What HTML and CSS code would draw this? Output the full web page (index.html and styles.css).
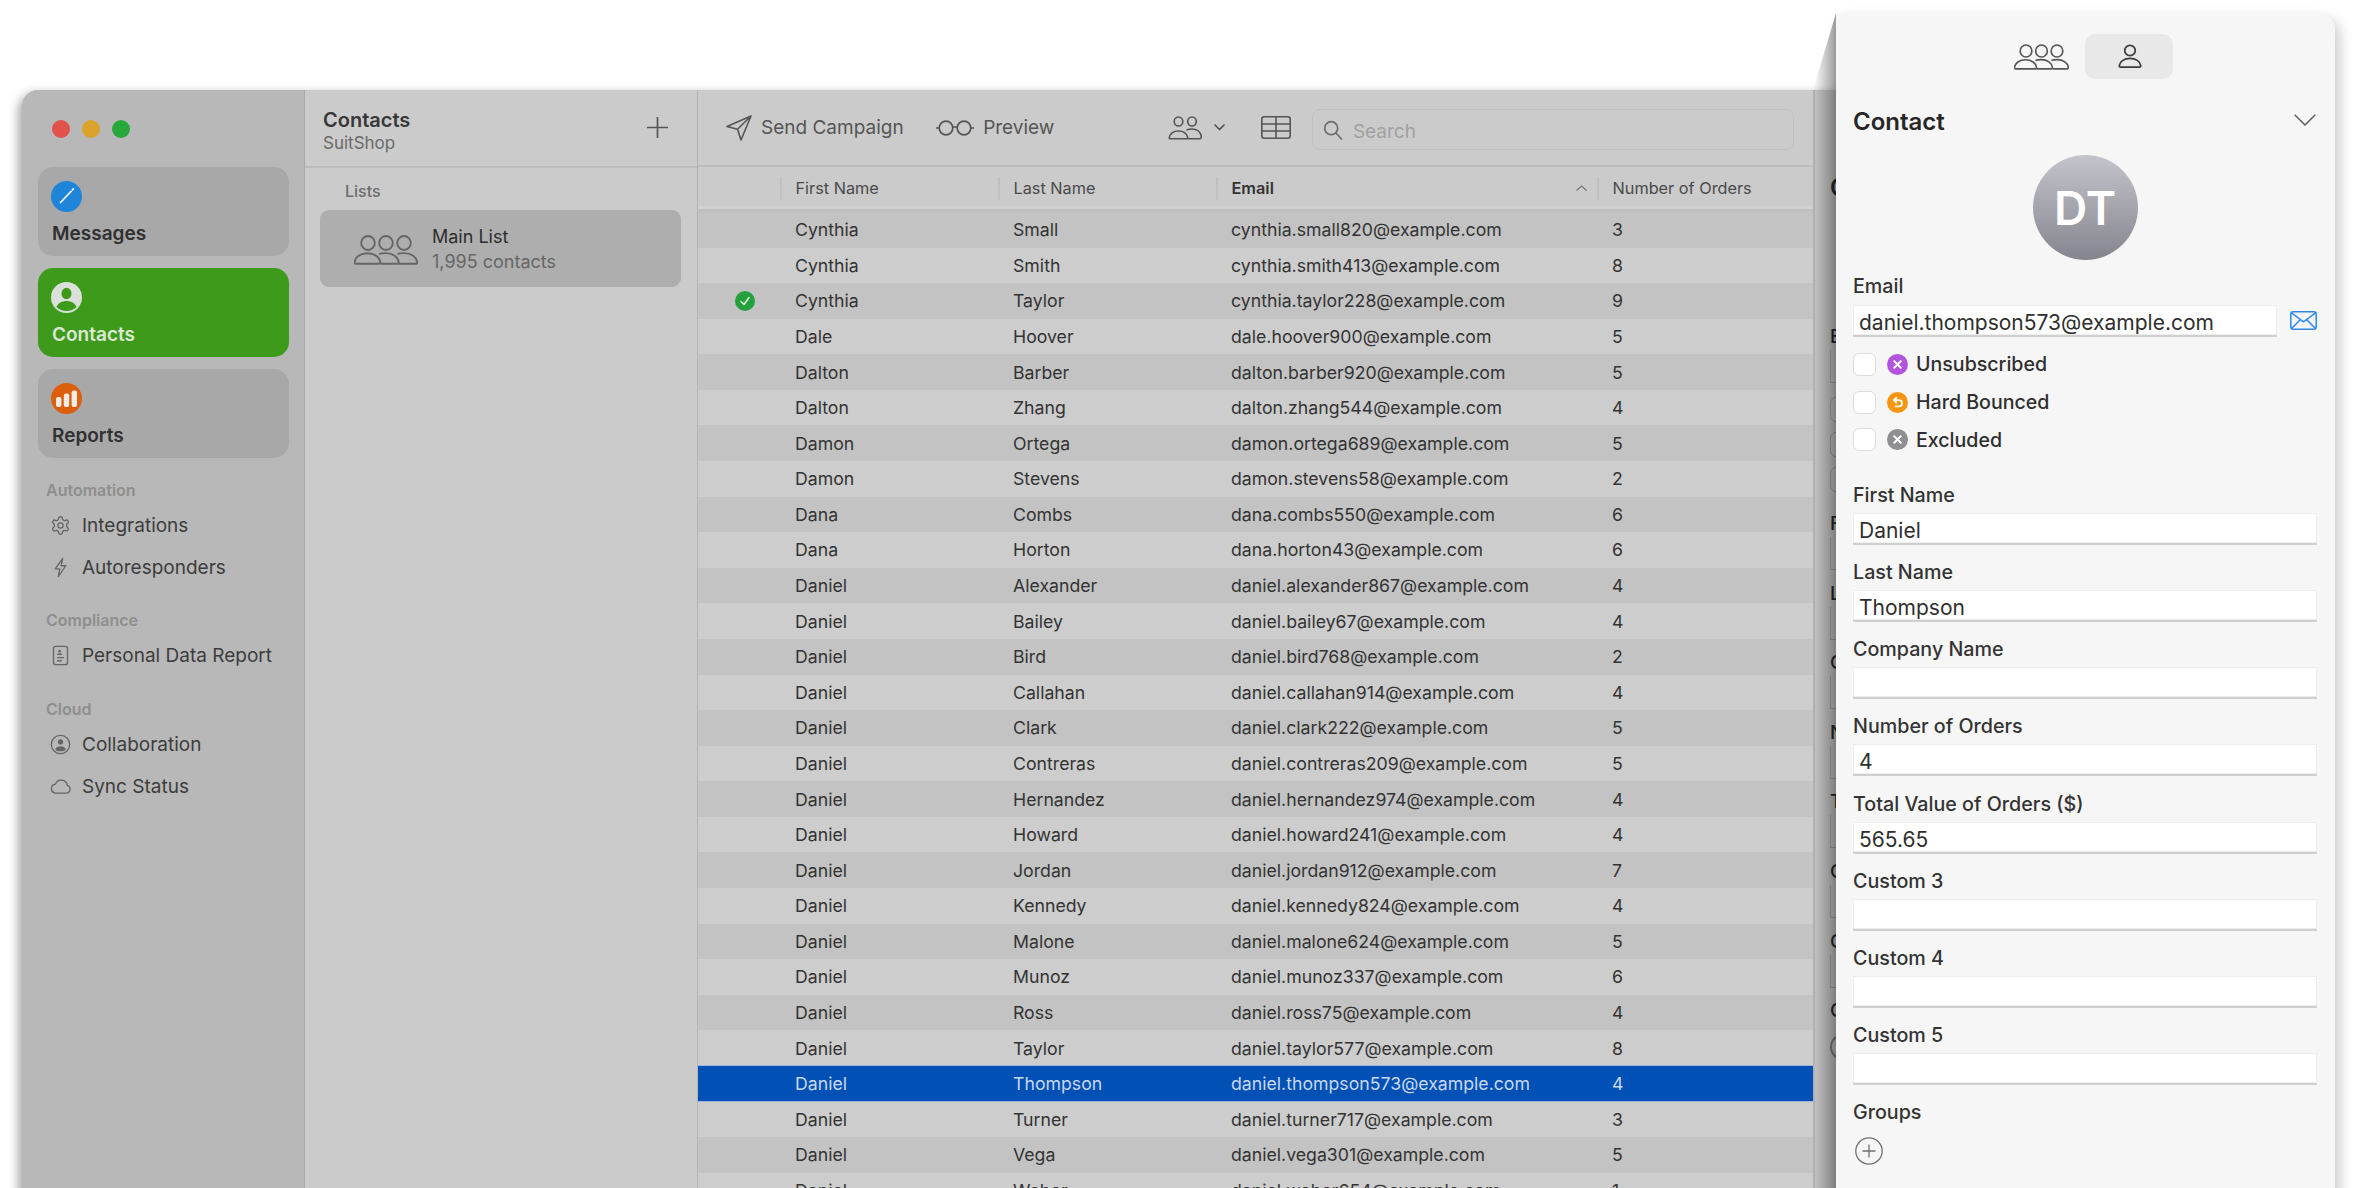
FILE: index.html
```html
<!DOCTYPE html>
<html lang="en">
<head>
<meta charset="utf-8">
<title>Contacts</title>
<link rel="stylesheet" href="styles.css">
</head>
<body>
<svg class="defs" width="0" height="0" aria-hidden="true">
  <symbol id="i-three" viewBox="0 0 64 30">
    <g fill="none" stroke="currentColor" stroke-width="1.9">
      <ellipse cx="14" cy="8" rx="6.800" ry="7"/><ellipse cx="32" cy="8" rx="6.800" ry="7"/><ellipse cx="50" cy="8" rx="6.800" ry="7"/>
      <path d="M1.5 28.8h23.4c1 0 1.5-.6 1.4-1.600-.6-5-6-9-12.900-9s-12.300 4-12.900 9c-.1 1 .4 1.600 1.500 1.600z"/>
      <path d="M25 18.800c2-.5 4.400-.7 6.800-.7 6.900 0 12.300 4 12.900 9 .1 1-.4 1.700-1.400 1.700H26.500"/>
      <path d="M43.500 18.800c2-.5 4.400-.7 6.800-.7 6.900 0 12.300 4 12.900 9 .1 1-.4 1.700-1.400 1.700H45"/>
    </g>
  </symbol>
  <symbol id="i-person" viewBox="0 0 26 26">
    <g fill="none" stroke="currentColor" stroke-width="1.900">
      <ellipse cx="13" cy="6.500" rx="5.700" ry="5.600"/>
      <path d="M2.800 24.500h20.400c1 0 1.600-.6 1.400-1.700-.7-4.500-5.500-7.800-11.600-7.800S2.100 18.300 1.400 22.800c-.2 1.100.4 1.700 1.400 1.700z"/>
    </g>
  </symbol>
  <symbol id="i-x" viewBox="0 0 22 22">
    <path d="M7.600 7.600l6.800 6.800M14.400 7.600l-6.800 6.800" stroke="#fff" stroke-width="2" stroke-linecap="round" fill="none"/>
  </symbol>
</svg>

<div class="desktop">
  <div class="window">
    <aside class="sidebar">
      <div class="traffic"><span class="light red"></span><span class="light amber"></span><span class="light green"></span></div>
      <nav class="cards">
        <a class="card">
          <svg class="card-icon" viewBox="0 0 31 31"><circle cx="15.500" cy="15.500" r="15.500" fill="#1e85d9"/><path d="M9.500 21.500L20 10.500" stroke="#fff" stroke-width="1.800" stroke-linecap="round"/><path d="M21.500 8.800l.8-.8" stroke="#fff" stroke-width="1.800" stroke-linecap="round"/></svg>
          <span>Messages</span>
        </a>
        <a class="card active">
          <svg class="card-icon" viewBox="0 0 31 31"><circle cx="15.500" cy="15.500" r="15.500" fill="#dce0da"/><ellipse cx="15.500" cy="11.500" rx="5" ry="5.800" fill="#3d9a1b"/><path d="M5.500 25c1.500-4 5.500-6 10-6s8.500 2 10 6c-2.600 2.500-6 4-10 4s-7.400-1.500-10-4z" fill="#3d9a1b"/></svg>
          <span>Contacts</span>
        </a>
        <a class="card">
          <svg class="card-icon" viewBox="0 0 31 31"><circle cx="15.500" cy="15.500" r="15.500" fill="#dc5f0c"/><rect x="5" y="14" width="5.400" height="10" rx="2" fill="#f1ece6"/><rect x="12.800" y="10.500" width="5.400" height="13.500" rx="2" fill="#f1ece6"/><rect x="20.600" y="7.500" width="5.400" height="16.500" rx="2" fill="#f1ece6"/></svg>
          <span>Reports</span>
        </a>
      </nav>
      <section class="side-group">
        <h3>Automation</h3>
        <a class="side-item">
          <svg class="side-icon" viewBox="0 0 24 24" fill="none" stroke="currentColor" stroke-width="1.500"><path d="M12.220 2h-.44a2 2 0 0 0-2 2v.18a2 2 0 0 1-1 1.730l-.43.250a2 2 0 0 1-2 0l-.15-.08a2 2 0 0 0-2.730.730l-.22.380a2 2 0 0 0 .730 2.730l.15.100a2 2 0 0 1 1 1.720v.510a2 2 0 0 1-1 1.740l-.15.090a2 2 0 0 0-.730 2.730l.22.380a2 2 0 0 0 2.730.730l.15-.08a2 2 0 0 1 2 0l.43.250a2 2 0 0 1 1 1.730V20a2 2 0 0 0 2 2h.44a2 2 0 0 0 2-2v-.18a2 2 0 0 1 1-1.730l.43-.25a2 2 0 0 1 2 0l.15.08a2 2 0 0 0 2.730-.73l.22-.39a2 2 0 0 0-.73-2.730l-.15-.08a2 2 0 0 1-1-1.740v-.5a2 2 0 0 1 1-1.740l.15-.09a2 2 0 0 0 .73-2.730l-.22-.38a2 2 0 0 0-2.730-.73l-.15.08a2 2 0 0 1-2 0l-.43-.25a2 2 0 0 1-1-1.730V4a2 2 0 0 0-2-2z"/><circle cx="12" cy="12" r="3"/></svg>
          <span>Integrations</span>
        </a>
        <a class="side-item">
          <svg class="side-icon" viewBox="0 0 24 24" fill="none" stroke="currentColor" stroke-width="1.500" stroke-linejoin="round"><path d="M14.500 1.500L6 13.500h5.200L9.500 22.500l8.500-12.500h-5.200z"/></svg>
          <span>Autoresponders</span>
        </a>
      </section>
      <section class="side-group">
        <h3>Compliance</h3>
        <a class="side-item">
          <svg class="side-icon" viewBox="0 0 24 24" fill="none" stroke="currentColor" stroke-width="1.500"><rect x="4" y="1.500" width="16" height="21" rx="2.500"/><circle cx="11" cy="7" r="1.500" fill="currentColor" stroke="none"/><path d="M8 11.500c0-1.500 1.400-2 3-2s3 .5 3 2z" fill="currentColor" stroke="none"/><path d="M8 14.500h8M8 18h5.500"/></svg>
          <span>Personal Data Report</span>
        </a>
      </section>
      <section class="side-group">
        <h3>Cloud</h3>
        <a class="side-item">
          <svg class="side-icon" viewBox="0 0 24 24" fill="none" stroke="currentColor" stroke-width="1.500"><circle cx="12" cy="12" r="10.500"/><circle cx="12" cy="9" r="3" fill="currentColor" stroke="none"/><path d="M6 18c.8-3 3-4 6-4s5.200 1 6 4c-1.600 1.200-3.700 1.800-6 1.800S7.600 19.200 6 18z" fill="currentColor" stroke="none"/></svg>
          <span>Collaboration</span>
        </a>
        <a class="side-item">
          <svg class="side-icon" viewBox="0 0 24 24" fill="none" stroke="currentColor" stroke-width="1.500" stroke-linejoin="round"><path d="M6 19.500h12.500a4.500 4.500 0 0 0 1.200-8.800 7 7 0 0 0-13.500-1.500A5.200 5.200 0 0 0 6 19.500z"/></svg>
          <span>Sync Status</span>
        </a>
      </section>
    </aside>

    <section class="lists">
      <header class="lists-head">
        <div class="lists-title"><strong>Contacts</strong><span>SuitShop</span></div>
        <svg class="plus" viewBox="0 0 21 21"><path d="M10.500 0v21M0 10.500h21" stroke="currentColor" stroke-width="1.700"/></svg>
      </header>
      <div class="lists-label">Lists</div>
      <div class="list-item">
        <svg class="list-icon"><use href="#i-three"/></svg>
        <div class="list-text"><b>Main List</b><span>1,995 contacts</span></div>
      </div>
    </section>

    <main class="main">
      <header class="toolbar">
        <a class="tool">
          <svg class="tool-send" viewBox="0 0 26 26" fill="none" stroke="currentColor" stroke-width="1.600" stroke-linejoin="round"><path d="M25 1L1 11.500l10.500 2.800L15 25zM25 1L11.500 14.300"/></svg>
          <span>Send Campaign</span>
        </a>
        <a class="tool tool-preview">
          <svg class="tool-glasses" viewBox="0 0 38 18" fill="none" stroke="currentColor" stroke-width="1.700"><circle cx="10" cy="9" r="6.800"/><circle cx="28" cy="9" r="6.800"/><path d="M16.800 8h4.400M0 9h3M35 9h3"/></svg>
          <span>Preview</span>
        </a>
        <svg class="tool-people" viewBox="0 0 34 24" fill="none" stroke="currentColor" stroke-width="1.600"><ellipse cx="10.500" cy="5.500" rx="4.300" ry="4.500"/><ellipse cx="24" cy="5.500" rx="4.300" ry="4.500"/><path d="M1.500 22.800h17c1 0 1.500-.6 1.200-1.500-1-3.800-4.500-6.300-9.200-6.300S2.300 17.500 1.300 21.300c-.3.900 .2 1.500 1.200 1.500z" /><path d="M18.500 14c1.600-.6 3.400-1 5.500-1 4.700 0 8.200 2.700 9.200 7 .2 1.200-.3 2.800-1.300 2.800h-12"/></svg>
        <svg class="tool-chev" viewBox="0 0 11 7" fill="none" stroke="currentColor" stroke-width="1.700" stroke-linecap="round" stroke-linejoin="round"><path d="M1 1l4.500 4.500L10 1"/></svg>
        <svg class="tool-table" viewBox="0 0 30 23" fill="none" stroke="currentColor" stroke-width="1.600"><rect x=".8" y=".8" width="28.400" height="21.400" rx="2.500"/><path d="M.8 8h28.400M.8 15h28.400M15 .8v21.400"/></svg>
        <div class="search">
          <svg class="search-icon" viewBox="0 0 20 20" fill="none" stroke="currentColor" stroke-width="1.700" stroke-linecap="round"><circle cx="8.200" cy="8.200" r="6.500"/><path d="M13 13l5.500 6"/></svg>
          <span>Search</span>
        </div>
      </header>

      <div class="thead">
        <div class="th"></div>
        <div class="th sep">First Name</div>
        <div class="th sep">Last Name</div>
        <div class="th sep email-h">Email<svg class="sort" viewBox="0 0 11 6" fill="none" stroke="currentColor" stroke-width="1.200"><path d="M.5 5.500L5.500 1l5 4.500"/></svg></div>
        <div class="th sep">Number of Orders</div>
      </div>

      <div class="tbody">
        <div class="tr"><div class="td"></div><div class="td">Cynthia</div><div class="td">Small</div><div class="td">cynthia.small820@example.com</div><div class="td">3</div></div>
        <div class="tr"><div class="td"></div><div class="td">Cynthia</div><div class="td">Smith</div><div class="td">cynthia.smith413@example.com</div><div class="td">8</div></div>
        <div class="tr"><div class="td td-check"><svg class="ok" viewBox="0 0 20 20"><circle cx="10" cy="10" r="10" fill="#25a03c"/><path d="M6 10.500l3 3 5-7" stroke="#dff3e2" stroke-width="1.500" fill="none" stroke-linecap="round" stroke-linejoin="round"/></svg></div><div class="td">Cynthia</div><div class="td">Taylor</div><div class="td">cynthia.taylor228@example.com</div><div class="td">9</div></div>
        <div class="tr"><div class="td"></div><div class="td">Dale</div><div class="td">Hoover</div><div class="td">dale.hoover900@example.com</div><div class="td">5</div></div>
        <div class="tr"><div class="td"></div><div class="td">Dalton</div><div class="td">Barber</div><div class="td">dalton.barber920@example.com</div><div class="td">5</div></div>
        <div class="tr"><div class="td"></div><div class="td">Dalton</div><div class="td">Zhang</div><div class="td">dalton.zhang544@example.com</div><div class="td">4</div></div>
        <div class="tr"><div class="td"></div><div class="td">Damon</div><div class="td">Ortega</div><div class="td">damon.ortega689@example.com</div><div class="td">5</div></div>
        <div class="tr"><div class="td"></div><div class="td">Damon</div><div class="td">Stevens</div><div class="td">damon.stevens58@example.com</div><div class="td">2</div></div>
        <div class="tr"><div class="td"></div><div class="td">Dana</div><div class="td">Combs</div><div class="td">dana.combs550@example.com</div><div class="td">6</div></div>
        <div class="tr"><div class="td"></div><div class="td">Dana</div><div class="td">Horton</div><div class="td">dana.horton43@example.com</div><div class="td">6</div></div>
        <div class="tr"><div class="td"></div><div class="td">Daniel</div><div class="td">Alexander</div><div class="td">daniel.alexander867@example.com</div><div class="td">4</div></div>
        <div class="tr"><div class="td"></div><div class="td">Daniel</div><div class="td">Bailey</div><div class="td">daniel.bailey67@example.com</div><div class="td">4</div></div>
        <div class="tr"><div class="td"></div><div class="td">Daniel</div><div class="td">Bird</div><div class="td">daniel.bird768@example.com</div><div class="td">2</div></div>
        <div class="tr"><div class="td"></div><div class="td">Daniel</div><div class="td">Callahan</div><div class="td">daniel.callahan914@example.com</div><div class="td">4</div></div>
        <div class="tr"><div class="td"></div><div class="td">Daniel</div><div class="td">Clark</div><div class="td">daniel.clark222@example.com</div><div class="td">5</div></div>
        <div class="tr"><div class="td"></div><div class="td">Daniel</div><div class="td">Contreras</div><div class="td">daniel.contreras209@example.com</div><div class="td">5</div></div>
        <div class="tr"><div class="td"></div><div class="td">Daniel</div><div class="td">Hernandez</div><div class="td">daniel.hernandez974@example.com</div><div class="td">4</div></div>
        <div class="tr"><div class="td"></div><div class="td">Daniel</div><div class="td">Howard</div><div class="td">daniel.howard241@example.com</div><div class="td">4</div></div>
        <div class="tr"><div class="td"></div><div class="td">Daniel</div><div class="td">Jordan</div><div class="td">daniel.jordan912@example.com</div><div class="td">7</div></div>
        <div class="tr"><div class="td"></div><div class="td">Daniel</div><div class="td">Kennedy</div><div class="td">daniel.kennedy824@example.com</div><div class="td">4</div></div>
        <div class="tr"><div class="td"></div><div class="td">Daniel</div><div class="td">Malone</div><div class="td">daniel.malone624@example.com</div><div class="td">5</div></div>
        <div class="tr"><div class="td"></div><div class="td">Daniel</div><div class="td">Munoz</div><div class="td">daniel.munoz337@example.com</div><div class="td">6</div></div>
        <div class="tr"><div class="td"></div><div class="td">Daniel</div><div class="td">Ross</div><div class="td">daniel.ross75@example.com</div><div class="td">4</div></div>
        <div class="tr"><div class="td"></div><div class="td">Daniel</div><div class="td">Taylor</div><div class="td">daniel.taylor577@example.com</div><div class="td">8</div></div>
        <div class="tr selected"><div class="td"></div><div class="td">Daniel</div><div class="td">Thompson</div><div class="td">daniel.thompson573@example.com</div><div class="td">4</div></div>
        <div class="tr"><div class="td"></div><div class="td">Daniel</div><div class="td">Turner</div><div class="td">daniel.turner717@example.com</div><div class="td">3</div></div>
        <div class="tr"><div class="td"></div><div class="td">Daniel</div><div class="td">Vega</div><div class="td">daniel.vega301@example.com</div><div class="td">5</div></div>
        <div class="tr"><div class="td"></div><div class="td">Daniel</div><div class="td">Weber</div><div class="td">daniel.weber654@example.com</div><div class="td">1</div></div>
      </div>
    </main>

    <aside class="ghost">
      <div class="ghost-title">Contact</div>
      <div class="ghost-label ghost-email">Email</div>
      <div class="ghost-input"></div>
      <div class="ghost-checks"><i></i><i></i><i></i></div>
      <div class="ghost-fields">
        <div class="ghost-field"><div class="ghost-label">First Name</div><div class="ghost-input"></div></div>
        <div class="ghost-field"><div class="ghost-label">Last Name</div><div class="ghost-input"></div></div>
        <div class="ghost-field"><div class="ghost-label">Company Name</div><div class="ghost-input"></div></div>
        <div class="ghost-field"><div class="ghost-label">Number of Orders</div><div class="ghost-input"></div></div>
        <div class="ghost-field"><div class="ghost-label">Total Value of Orders ($)</div><div class="ghost-input"></div></div>
        <div class="ghost-field"><div class="ghost-label">Custom 3</div><div class="ghost-input"></div></div>
        <div class="ghost-field"><div class="ghost-label">Custom 4</div><div class="ghost-input"></div></div>
        <div class="ghost-field"><div class="ghost-label">Custom 5</div></div>
        <div class="ghost-add"></div>
      </div>
    </aside>
  </div>

  <aside class="inspector">
    <div class="wedge"></div>
    <div class="segments">
      <button class="seg"><svg class="seg-three"><use href="#i-three"/></svg></button>
      <button class="seg on"><svg class="seg-person"><use href="#i-person"/></svg></button>
    </div>
    <div class="insp-head">
      <h2>Contact</h2>
      <svg class="insp-chev" viewBox="0 0 22 12" fill="none" stroke="currentColor" stroke-width="1.500"><path d="M.7 .7L11 11 21.300 .7"/></svg>
    </div>
    <div class="avatar">DT</div>
    <div class="f-label email-label">Email</div>
    <div class="email-row">
      <div class="f-input">daniel.thompson573@example.com</div>
      <svg class="mail" viewBox="0 0 27 19" fill="none" stroke="#2f86ea" stroke-width="1.500"><rect x=".8" y=".8" width="25.400" height="17.400" rx="2.500"/><path d="M1.500 1.800l12 9 12-9M1.500 17.500l8.500-8.500M25.500 17.500L17 9"/></svg>
    </div>
    <div class="checks">
      <label class="check"><span class="box"></span><svg class="status" viewBox="0 0 22 22"><circle cx="11" cy="11" r="11" fill="#b255dd"/><use href="#i-x"/></svg>Unsubscribed</label>
      <label class="check"><span class="box"></span><svg class="status" viewBox="0 0 22 22"><circle cx="11" cy="11" r="11" fill="#f7960e"/><path d="M8 8.500h4.500a3.200 3.200 0 0 1 0 6.500H9" stroke="#fff" stroke-width="1.900" fill="none" stroke-linecap="round"/><path d="M9.800 6L7.200 8.500l2.600 2.500" stroke="#fff" stroke-width="1.900" fill="none" stroke-linecap="round" stroke-linejoin="round"/></svg>Hard Bounced</label>
      <label class="check"><span class="box"></span><svg class="status" viewBox="0 0 22 22"><circle cx="11" cy="11" r="11" fill="#8e8e93"/><use href="#i-x"/></svg>Excluded</label>
    </div>
    <div class="fields">
      <div class="field"><div class="f-label">First Name</div><div class="f-input">Daniel</div></div>
      <div class="field"><div class="f-label">Last Name</div><div class="f-input">Thompson</div></div>
      <div class="field"><div class="f-label">Company Name</div><div class="f-input"></div></div>
      <div class="field"><div class="f-label">Number of Orders</div><div class="f-input">4</div></div>
      <div class="field"><div class="f-label">Total Value of Orders ($)</div><div class="f-input">565.65</div></div>
      <div class="field"><div class="f-label">Custom 3</div><div class="f-input"></div></div>
      <div class="field"><div class="f-label">Custom 4</div><div class="f-input"></div></div>
      <div class="field"><div class="f-label">Custom 5</div><div class="f-input"></div></div>
      <div class="field"><div class="f-label">Groups</div>
        <svg class="add" viewBox="0 0 28 28" fill="none" stroke="#6f6f6f" stroke-width="1.300"><circle cx="14" cy="14" r="13.200"/><path d="M14 7.500v13M7.500 14h13"/></svg>
      </div>
    </div>
  </aside>
</div>
</body>
</html>
```
FILE: styles.css
```css
* { box-sizing: border-box; }
html, body { margin: 0; padding: 0; height: 100%; background: #fff; }
body { font-family: Inter, "Liberation Sans", sans-serif; overflow: hidden; }
.defs { position: absolute; }
svg { display: block; flex: none; }
h2, h3 { margin: 0; }

.desktop { position: relative; width: 2356px; height: 1188px; overflow: hidden; background: #fff; }

/* main window */
.window {
  position: absolute; left: 22px; top: 90px; width: 2200px; height: 1110px;
  display: flex; background: #cbcbcb;
  border-radius: 16px 16px 0 0; overflow: hidden;
}
.desktop::before {
  content: ""; position: absolute; left: 22px; top: 90px; width: 1900px; height: 1110px;
  border-radius: 16px 16px 0 0; box-shadow: -3px 4px 11px rgba(0,0,0,.38);
}

/* sidebar */
.sidebar { width: 283px; flex: none; background: #b8b8b8; border-right: 1px solid #aaa; display: flex; flex-direction: column; }
.traffic { display: flex; gap: 12px; padding: 30px 0 0 30px; height: 48px; }
.light { width: 18px; height: 18px; border-radius: 50%; }
.red { background: #e0524b; }
.amber { background: #dba32c; }
.green { background: #27a73c; }
.cards { display: flex; flex-direction: column; gap: 12px; margin: 29px 15px 0 16px; }
.card {
  height: 89px; border-radius: 15px; background: #a8a8a8; padding: 14px 13px 0;
  display: flex; flex-direction: column; color: #303030; font-size: 19px; font-weight: 600; line-height: 24px;
}
.card span { margin-top: 10px; padding-left: 1px; }
.card-icon { width: 31px; height: 31px; }
.card.active { background: #3d9a1b; color: #dbe8d3; }
.side-group { padding-left: 24px; margin-top: 21px; }
.side-group:first-of-type { margin-top: 20.500px; }
.side-group h3 { font-size: 16px; font-weight: 600; line-height: 22px; color: #8e8e8e; margin-bottom: 4px; }
.side-item { display: flex; align-items: center; gap: 11px; height: 41.700px; padding-left: 4px; color: #3d3d3d; font-size: 19px; }
.side-icon { width: 21px; height: 21px; color: #666; }

/* lists column */
.lists { width: 393px; flex: none; border-right: 1px solid #b4b4b4; background: #cbcbcb; }
.lists-head { height: 78px; border-bottom: 2px solid #bcbcbc; display: flex; justify-content: space-between; align-items: center; padding: 0 29px 2px 18px; }
.lists-title { display: flex; flex-direction: column; font-size: 17px; color: #6a6a6a; line-height: 22px; margin-top: 7px; }
.lists-title strong { font-size: 20px; font-weight: 600; color: #383838; line-height: 24px; }
.plus { width: 21px; height: 21px; color: #555; }
.lists-label { padding-left: 40px; font-size: 16px; font-weight: 500; color: #6d6d6d; line-height: 22px; margin-top: 12px; }
.list-item { margin: 8px 16px 0 15px; height: 77px; border-radius: 9px; background: #aeaeae; display: flex; align-items: center; padding-left: 34px; gap: 14px; }
.list-icon { width: 64px; height: 30px; color: #666; margin-top: 2px; }
.list-text { display: flex; flex-direction: column; font-size: 18px; line-height: 25px; color: #666; }
.list-text b { font-weight: 400; color: #2d2d2d; }

/* main column */
.main { width: 1115px; flex: none; display: flex; flex-direction: column; background: #cbcbcb; }
.toolbar { height: 77px; flex: none; border-bottom: 2px solid #bdbdbd; display: flex; align-items: center; padding: 0 19px 0 28px; color: #555; font-size: 19px; }
.tool { display: flex; align-items: center; }
.tool-send { width: 26px; height: 26px; margin-right: 9px; }
.tool-preview { margin-left: 32.500px; }
.tool-glasses { width: 38px; height: 18px; margin-right: 9px; }
.tool-people { width: 34px; height: 24px; margin-left: 113.500px; }
.tool-chev { width: 11px; height: 7px; margin-left: 12px; }
.tool-table { width: 30px; height: 23px; margin-left: 36.500px; }
.search {
  flex: 1; margin-left: 20.500px; height: 41px; margin-top: 4px; border: 1px solid #c1c1c1; border-radius: 8px;
  display: flex; align-items: center; padding: 3px 0 0 10px; color: #a1a1a1;
}
.search-icon { width: 20px; height: 20px; margin-right: 10px; color: #6d6d6d; margin-top: -3px; }

.thead {
  height: 45px; flex: none; display: grid; grid-template-columns: 82px 218px 218px 381px 1fr;
  align-items: center; font-size: 16.300px; color: #4a4a4a; border-bottom: 3px solid #bfbfbf;
  background: linear-gradient(#cbcbcb 0 39px, #d0d0d0 39px);
}
.th { height: 23px; line-height: 23px; padding-left: 13.500px; }
.th.sep { border-left: 2px solid #c0c0c0; }
.email-h { font-weight: 600; color: #333; display: flex; align-items: center; justify-content: space-between; padding-right: 10px; }
.sort { width: 11px; height: 6px; color: #777; }

.tbody { flex: none; }
.tr { height: 35.580px; display: grid; grid-template-columns: 82px 218px 218px 381px 1fr; align-items: center; font-size: 17.700px; color: #333; background: #cdcdcd; }
.tr:nth-child(odd) { background: #c3c3c3; }
.td { padding-left: 15px; white-space: nowrap; }
.td-check { padding-left: 37px; }
.ok { width: 20px; height: 20px; }
.tr.selected { background: #0050b5; color: #c9d8ee; box-shadow: 0 -1px 0 #9db7da, 0 1px 0 #9db7da; position: relative; }

/* window beneath the inspector */
.ghost { flex: 1; background: #c6c6c6; border-left: 2px solid #b3b3b3; padding: 83px 0 0 15px; color: #2a2a2a; font-size: 19px; font-weight: 500; }
.ghost-title { font-size: 24px; font-weight: 600; line-height: 30px; }
.ghost-label { line-height: 26px; height: 26px; }
.ghost-email { margin-top: 121px; }
.ghost-input { height: 33px; border-bottom: 1px solid #a3a3a3; border-left: 1px solid #a8a8a8; }
.ghost-checks { display: flex; flex-direction: column; gap: 10px; margin-top: 14px; }
.ghost-checks i { width: 25px; height: 25px; border: 1px solid #a0a0a0; border-radius: 6px; }
.ghost-fields { margin-top: 19px; }
.ghost-field { height: 69.600px; }
.ghost-add { width: 26px; height: 26px; border: 2px solid #7c7c7c; border-radius: 50%; margin-top: -34px; }

/* inspector panel */
.inspector {
  position: absolute; left: 1836px; top: 13px; width: 499px; height: 1200px; background: #f6f6f6;
  border-radius: 0 16px 0 0; padding: 21px 18px 0 17px; color: #2b2b2b;
  box-shadow: 5px 6px 14px rgba(0,0,0,.2);
}
.inspector::before {
  content: ""; position: absolute; left: -23px; top: 77px; bottom: 0; width: 23px;
  background: linear-gradient(90deg, rgba(0,0,0,0), rgba(0,0,0,.34));
}
.wedge {
  position: absolute; left: -23px; top: 0; width: 23px; height: 77px;
  background: linear-gradient(90deg, rgba(0,0,0,0), rgba(0,0,0,.38));
  clip-path: polygon(100% 0, 100% 100%, 0 100%);
}
.segments { display: flex; justify-content: center; height: 45px; }
.seg { width: 87.500px; height: 45px; border: 0; border-radius: 10px; background: transparent; display: flex; align-items: center; justify-content: center; padding: 0; color: #555; }
.seg.on { background: #e8e8e8; color: #3c3c3c; }
.seg-three { width: 55px; height: 26px; }
.seg-person { width: 24px; height: 25px; margin-left: 3px; }
.insp-head { display: flex; justify-content: space-between; align-items: center; margin-top: 28px; height: 30px; padding-right: 1px; }
.insp-head h2 { font-size: 24px; font-weight: 600; line-height: 30px; color: #262626; }
.insp-chev { width: 22px; height: 12px; color: #5e5e5e; margin-top: -4px; }
.avatar {
  width: 105px; height: 105px; border-radius: 50%; margin: 18px auto 0;
  background: linear-gradient(#c4c4cc, #85858f); color: #fff; font-size: 46px; font-weight: 600;
  display: flex; align-items: center; justify-content: center;
}
.f-label { font-size: 19.700px; font-weight: 500; line-height: 26px; color: #333; }
.email-label { margin: 13px 0 5.500px; }
.email-row { display: flex; align-items: center; gap: 13px; }
.email-row .f-input { flex: none; width: 424px; }
.mail { width: 27px; height: 19px; }
.f-input { height: 32px; background: #fff; border-bottom: 2px solid #cfcfcf; box-shadow: 0 0 0 1px #eeeeee inset; padding-left: 6px; font-size: 21px; line-height: 35px; color: #2f2f2f; overflow: hidden; }
.checks { margin-top: 9px; }
.check { display: flex; align-items: center; height: 37.800px; font-size: 19.600px; font-weight: 500; color: #2f2f2f; }
.box { width: 23px; height: 23px; background: #fff; border: 1.500px solid #dcdcdc; border-radius: 6px; margin-right: 11px; }
.status { width: 21px; height: 21px; margin-right: 8px; }
.fields { margin-top: 23px; }
.field { height: 77.200px; }
.field .f-label { margin-bottom: 5px; }
.add { width: 28px; height: 28px; margin-left: 2px; margin-top: 12px; }
```
